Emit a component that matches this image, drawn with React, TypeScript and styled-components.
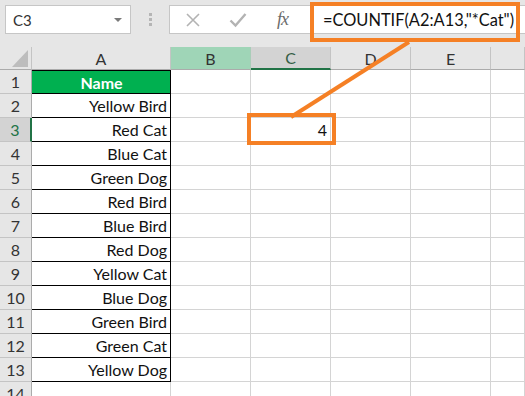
import { FC } from 'react';
import styled, { createGlobalStyle } from 'styled-components';

const GlobalStyle = createGlobalStyle`
  html, body {
    margin: 0;
    padding: 0;
    background: #ffffff;
    overflow: hidden;
  }
  body {
    font-family: Lato, 'Liberation Sans', sans-serif;
  }
`;

const ORANGE = '#f58025';
const GREEN = '#217346';
const GRID = '#d4d4d4';

const Page = styled.div`
  position: relative;
  width: 525px;
  height: 396px;
  overflow: hidden;
  background: #ffffff;
`;

const Toolbar = styled.div`
  display: flex;
  align-items: flex-start;
  height: 47px;
  padding: 5px 0 0 5px;
  box-sizing: border-box;
  background: #e6e6e6;
`;

const NameBox = styled.div`
  display: flex;
  align-items: center;
  justify-content: space-between;
  width: 126px;
  height: 29px;
  box-sizing: border-box;
  padding: 0 8px 0 7px;
  background: #fff;
  border: 1px solid #c6c6c6;
  font-size: 15px;
  color: #333;
`;

const Caret = styled.span`
  width: 0;
  height: 0;
  border-left: 4px solid transparent;
  border-right: 4px solid transparent;
  border-top: 4px solid #7a7a7a;
`;

const Grip = styled.div`
  display: flex;
  flex-direction: column;
  gap: 2px;
  width: 38px;
  height: 29px;
  align-items: center;
  justify-content: center;
`;

const GripDot = styled.span`
  width: 3px;
  height: 3px;
  background: #b5b5b5;
`;

const FormulaBar = styled.div`
  display: flex;
  align-items: center;
  flex: 1;
  height: 29px;
  box-sizing: border-box;
  background: #fff;
  border: 1px solid #c6c6c6;
  border-right: none;
`;

const IconSlot = styled.span`
  display: flex;
  align-items: center;
  justify-content: center;
  width: 45px;
  height: 100%;
`;

const Fx = styled.span`
  font-family: 'Liberation Serif', serif;
  font-style: italic;
  font-size: 18px;
  color: #6b6b6b;
  letter-spacing: -1px;
`;

const Formula = styled.span`
  margin-left: 18px;
  font-size: 16.4px;
  color: #111;
  white-space: nowrap;
`;

const Sheet = styled.div`
  display: grid;
  grid-template-columns: 32px 139px 80px 80px 80px 80px 34px;
  grid-template-rows: 23px repeat(14, 24px);
`;

const Corner = styled.div`
  background: #e6e6e6;
  border-right: 1px solid #c4c4c4;
  border-bottom: 1px solid #ababab;
  box-sizing: border-box;
  display: flex;
  align-items: flex-end;
  justify-content: flex-end;
  padding: 0 3px 2px 0;
`;

const CornerTriangle = styled.span`
  width: 0;
  height: 0;
  border-left: 16px solid transparent;
  border-bottom: 17px solid #bdbdbd;
`;

const ColHead = styled.div<{ $mode?: 'hl' | 'active' }>`
  display: flex;
  align-items: center;
  justify-content: center;
  box-sizing: border-box;
  font-size: 16px;
  background: ${(p) =>
    p.$mode === 'hl' ? '#9fd5b7' : p.$mode === 'active' ? '#d3d3d3' : '#e6e6e6'};
  border-right: 1px solid ${(p) => (p.$mode === 'hl' ? '#a9cdb8' : '#c4c4c4')};
  border-bottom: ${(p) =>
    p.$mode === 'active' ? `2px solid ${GREEN}` : '1px solid #ababab'};
  color: ${(p) => (p.$mode === 'active' ? '#355e45' : '#333')};
`;

const RowHead = styled.div<{ $active?: boolean }>`
  display: flex;
  align-items: center;
  justify-content: center;
  box-sizing: border-box;
  font-size: 16px;
  background: ${(p) => (p.$active ? '#d3d3d3' : '#e6e6e6')};
  color: ${(p) => (p.$active ? GREEN : '#333')};
  border-bottom: 1px solid #c4c4c4;
  border-right: ${(p) => (p.$active ? `2px solid ${GREEN}` : '1px solid #ababab')};
`;

const Cell = styled.div<{ $boxed?: boolean; $header?: boolean; $first?: boolean }>`
  display: flex;
  align-items: center;
  justify-content: ${(p) => (p.$header ? 'center' : 'flex-end')};
  box-sizing: border-box;
  padding: 0 3px 0 4px;
  font-size: 16px;
  font-weight: ${(p) => (p.$header ? 700 : 400)};
  color: ${(p) => (p.$header ? '#fff' : '#111')};
  background: ${(p) => (p.$header ? '#00b050' : '#fff')};
  border-right: 1px solid ${(p) => (p.$boxed ? '#000' : GRID)};
  border-bottom: 1px solid ${(p) => (p.$boxed ? '#000' : GRID)};
  border-top: ${(p) => (p.$boxed && p.$first ? '1px solid #000' : 'none')};
`;

const Annotation = styled.svg`
  position: absolute;
  left: 0;
  top: 0;
  pointer-events: none;
`;

const names = [
  'Yellow Bird',
  'Red Cat',
  'Blue Cat',
  'Green Dog',
  'Red Bird',
  'Blue Bird',
  'Red Dog',
  'Yellow Cat',
  'Blue Dog',
  'Green Bird',
  'Green Cat',
  'Yellow Dog',
];

const columns = ['A', 'B', 'C', 'D', 'E', ''];

const Row: FC<{ r: number }> = ({ r }) => (
  <>
    <RowHead $active={r === 3}>{r}</RowHead>
    {r === 1 ? (
      <Cell $boxed $header $first>
        Name
      </Cell>
    ) : r <= 13 ? (
      <Cell $boxed>{names[r - 2]}</Cell>
    ) : (
      <Cell />
    )}
    <Cell />
    <Cell>{r === 3 ? '4' : ''}</Cell>
    <Cell />
    <Cell />
    <Cell />
  </>
);

const App: FC = () => {
  const rows = Array.from({ length: 14 }, (_, i) => i + 1);
  return (
    <Page>
      <GlobalStyle />
      <Toolbar>
        <NameBox>
          <span>C3</span>
          <Caret />
        </NameBox>
        <Grip>
          <GripDot />
          <GripDot />
          <GripDot />
        </Grip>
        <FormulaBar>
          <IconSlot>
            <svg width="16" height="16" viewBox="0 0 16 16">
              <path d="M2 2 L14 14 M14 2 L2 14" stroke="#b3b3b3" strokeWidth="1.6" />
            </svg>
          </IconSlot>
          <IconSlot>
            <svg width="18" height="16" viewBox="0 0 18 16">
              <path d="M1.5 8.5 L6.5 13.5 L16.5 2" stroke="#b3b3b3" strokeWidth="2.4" fill="none" />
            </svg>
          </IconSlot>
          <IconSlot>
            <Fx>fx</Fx>
          </IconSlot>
          <Formula>=COUNTIF(A2:A13,"*Cat")</Formula>
        </FormulaBar>
      </Toolbar>
      <Sheet>
        <Corner>
          <CornerTriangle />
        </Corner>
        {columns.map((c) => (
          <ColHead key={c || 'F'} $mode={c === 'B' ? 'hl' : c === 'C' ? 'active' : undefined}>
            {c}
          </ColHead>
        ))}
        {rows.map((r) => (
          <Row key={r} r={r} />
        ))}
      </Sheet>
      <Annotation width="525" height="396">
        <rect x="312" y="4" width="206" height="36" fill="none" stroke={ORANGE} strokeWidth="4" />
        <line x1="409" y1="42" x2="291" y2="117" stroke={ORANGE} strokeWidth="4" />
        <rect x="249" y="115" width="85" height="28" fill="none" stroke={ORANGE} strokeWidth="4" />
      </Annotation>
    </Page>
  );
};

export default App;
